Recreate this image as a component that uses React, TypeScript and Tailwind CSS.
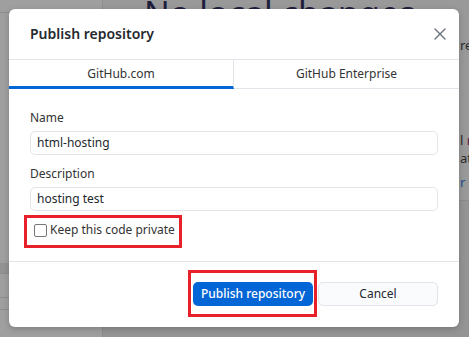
import React from "react";

function CloseIcon() {
  return (
    <svg width="12" height="12" viewBox="0 0 12 12" fill="none">
      <path d="M1 1L11 11M11 1L1 11" stroke="#6a737d" strokeWidth="1.4" strokeLinecap="round" />
    </svg>
  );
}

export default function App() {
  return (
    <div
      className="relative w-[469px] h-[337px] overflow-hidden bg-[#999999]"
      style={{ fontFamily: '"Noto Sans", "Noto Sans CJK KR", sans-serif' }}
    >
      {/* dimmed background app */}
      <div className="flex h-full">
        <div className="w-[103px] h-full bg-[#9f9f9f] border-r border-[#8d8d8d] flex flex-col shrink-0">
          <div className="h-[13px] border-b border-[#8d8d8d]" />
          <div className="h-[250px]" />
          <div className="h-[11px] border-b border-[#8d8d8d] bg-[#939393]" />
          <div className="h-[24px] border-b border-[#8d8d8d]" />
          <div className="h-[12px] border-b border-[#8d8d8d]" />
        </div>
        <div className="flex-1 flex flex-col">
          <div className="text-[34px] leading-none mt-[-4px] ml-[41px] text-[#1e1e3c] whitespace-nowrap">
            No local changes
          </div>
          <div className="ml-[357px] text-[13px] text-[#2a2a2a] whitespace-nowrap leading-[16px]">
            <div className="mt-[7px]">re</div>
            <div className="mt-[79px]">
              l <span className="text-[#5a1d4a]">r</span>
            </div>
            <div className="mt-[2px]">at</div>
            <div className="mt-[8px] text-[#1d4f8a]">r</div>
          </div>
          <div className="mt-[10px] flex-1 bg-[#949494] border-t border-[#8a8a8a]" />
        </div>
      </div>

      {/* modal dialog */}
      <div className="absolute left-[9px] top-[9px] w-[450px] h-[318px] bg-white rounded-[6px] shadow-[0_2px_6px_rgba(0,0,0,0.2)] flex flex-col text-[#24292e]">
        <div className="h-[51px] shrink-0 border-b border-[#e1e4e8] flex items-center justify-between pl-[21px] pr-[13px]">
          <span className="text-[14px] font-semibold leading-none">Publish repository</span>
          <CloseIcon />
        </div>
        <div className="h-[29px] shrink-0 flex text-[12px] text-[#333333]">
          <div className="w-[225px] border-r border-[#e1e4e8] border-b-[3px] border-b-[#0366d6] flex items-center justify-center pt-[2px]">
            GitHub.com
          </div>
          <div className="flex-1 border-b border-[#e1e4e8] flex items-center justify-center">
            GitHub Enterprise
          </div>
        </div>
        <div className="h-[172px] shrink-0 px-[21px] pt-[21px] flex flex-col text-[12px]">
          <label className="leading-[16px] text-[#333333]">Name</label>
          <div className="mt-[5px] h-[24px] rounded-[5px] border border-[#e1e4e8] flex items-center px-[6px] text-[#24292e]">
            html-hosting
          </div>
          <label className="mt-[11px] leading-[16px] text-[#333333]">Description</label>
          <div className="mt-[5px] h-[24px] rounded-[5px] border border-[#e1e4e8] flex items-center px-[6px] text-[#24292e]">
            hosting test
          </div>
          <div className="mt-[11px] relative flex items-center h-[16px] pl-[4px]">
            <div className="w-[13px] h-[13px] rounded-[2px] border border-[#767676] bg-white" />
            <span className="ml-[3px] text-[#333333]">Keep this code private</span>
            <div className="absolute left-[-6px] top-[-7px] w-[158px] h-[33px] border-[3px] border-[#e8202a]" />
          </div>
        </div>
        <div className="flex-1 border-t border-[#e1e4e8] flex justify-end items-start pt-[20px] pr-[21px] gap-[5px] text-[12px]">
          <div className="relative">
            <button className="w-[120px] h-[24px] rounded-[5px] bg-[#0366d6] text-white font-medium">
              Publish repository
            </button>
            <div className="absolute left-[-5px] top-[-12px] w-[129px] h-[47px] border-[3px] border-[#e8202a]" />
          </div>
          <button className="w-[120px] h-[24px] rounded-[5px] bg-[#fafbfc] border border-[#e1e4e8] text-[#24292e]">
            Cancel
          </button>
        </div>
      </div>
    </div>
  );
}
